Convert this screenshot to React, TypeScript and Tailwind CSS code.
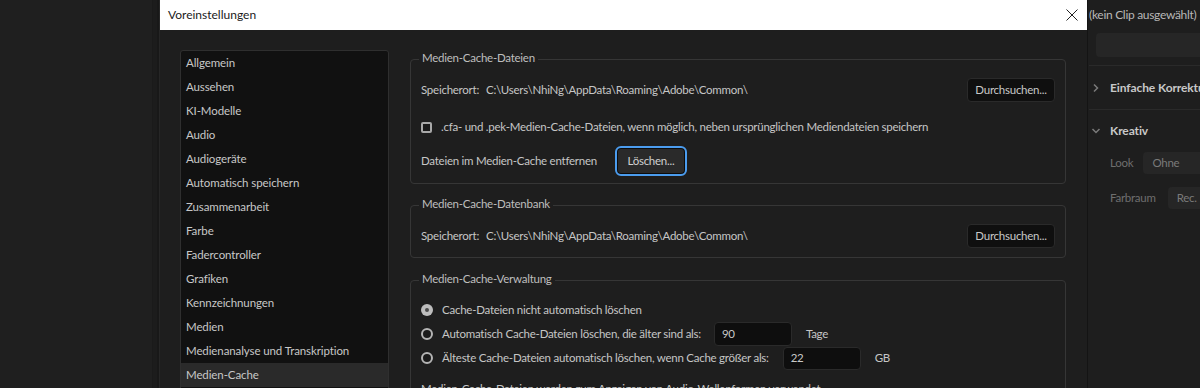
import React from "react";

const listItems = [
  "Allgemein",
  "Aussehen",
  "KI-Modelle",
  "Audio",
  "Audiogeräte",
  "Automatisch speichern",
  "Zusammenarbeit",
  "Farbe",
  "Fadercontroller",
  "Grafiken",
  "Kennzeichnungen",
  "Medien",
  "Medienanalyse und Transkription",
  "Medien-Cache",
];

function Legend({ children }: { children: React.ReactNode }) {
  return (
    <span className="absolute -top-[10px] left-[8px] bg-[#1e1e1e] px-[3px] leading-[16px] text-[#bebebe]">
      {children}
    </span>
  );
}

function BrowseButton() {
  return (
    <button className="flex h-[24px] w-[88px] items-center justify-center rounded-[4px] border border-[#2a2a2a] bg-[#0f0f0f] text-[#c8c8c8]">
      Durchsuchen...
    </button>
  );
}

function PathRow() {
  return (
    <div className="flex h-[24px] items-center justify-between">
      <div className="flex items-center">
        <span className="w-[65px]">Speicherort:</span>
        <span>C:\Users\NhiNg\AppData\Roaming\Adobe\Common\</span>
      </div>
      <BrowseButton />
    </div>
  );
}

function Radio({ checked }: { checked?: boolean }) {
  return checked ? (
    <span className="flex h-[12px] w-[12px] items-center justify-center rounded-full bg-[#bdbdbd]">
      <span className="h-[4px] w-[4px] rounded-full bg-[#4a4a4a]" />
    </span>
  ) : (
    <span className="h-[12px] w-[12px] rounded-full border-[2.5px] border-[#b4b4b4] bg-[#1a1a1a]" />
  );
}

function Chevron({ down }: { down?: boolean }) {
  return (
    <svg width="10" height="10" viewBox="0 0 10 10" className="shrink-0">
      {down ? (
        <path d="M1.5 3 L5 6.5 L8.5 3" fill="none" stroke="#7a7a7a" strokeWidth="1.5" />
      ) : (
        <path d="M3 1.5 L6.5 5 L3 8.5" fill="none" stroke="#7a7a7a" strokeWidth="1.5" />
      )}
    </svg>
  );
}

export default function App() {
  return (
    <div className="flex h-[388px] w-[1200px] overflow-hidden bg-[#1f1f1f] font-['Lato','Noto_Sans',sans-serif] text-[11.5px] tracking-[-0.25px] text-[#c6c6c6]">
      {/* left background strip */}
      <div className="flex w-[160px] shrink-0 justify-end">
        <div className="flex w-[8px]">
          <div className="w-[1px] bg-[#1a1a1a]" />
          <div className="w-[4px] bg-[#1c1c1c]" />
          <div className="w-[2px] bg-[#181818]" />
          <div className="w-[1px] bg-[#262626]" />
        </div>
      </div>

      {/* dialog */}
      <div className="flex w-[927px] shrink-0 flex-col">
        <div className="flex h-[30px] shrink-0 items-center justify-between bg-white pl-[8px] pr-[9px] text-[12px] tracking-normal text-[#1a1a1a]">
          <span>Voreinstellungen</span>
          <svg width="12" height="12" viewBox="0 0 12 12">
            <path d="M0.5 0.5 L11.5 11.5 M11.5 0.5 L0.5 11.5" stroke="#222" strokeWidth="1" />
          </svg>
        </div>
        <div className="flex min-h-0 flex-1 overflow-hidden bg-[#1e1e1e] pl-[20px] pr-[21px] pt-[20px]">
          {/* category list */}
          <div className="h-[360px] w-[209px] shrink-0 rounded-[3px] border border-[#2f2f2f] bg-[#111111] tracking-[-0.1px]">
            {listItems.map((item) => (
              <div
                key={item}
                className={
                  item === "Medien-Cache"
                    ? "flex h-[24px] items-center bg-[#2a2a2a] px-[5px] text-[#c8c8c8]"
                    : "flex h-[24px] items-center px-[5px] text-[#c8c8c8]"
                }
              >
                {item}
              </div>
            ))}
          </div>

          {/* settings */}
          <div className="ml-[21px] flex flex-1 flex-col">
            <div className="relative mt-[9px] rounded-[4px] border border-[#363636] px-[10px] pb-[7px] pt-[18px]">
              <Legend>Medien-Cache-Dateien</Legend>
              <PathRow />
              <div className="mt-[15px] flex h-[20px] items-center">
                <span className="h-[11px] w-[11px] rounded-[2px] border-2 border-[#a8a8a8] bg-[#1a1a1a]" />
                <span className="ml-[9px]">
                  .cfa- und .pek-Medien-Cache-Dateien, wenn möglich, neben ursprünglichen Mediendateien speichern
                </span>
              </div>
              <div className="mt-[9px] flex h-[30px] items-center">
                <span>Dateien im Medien-Cache entfernen</span>
                <button className="ml-[18px] flex h-[30px] w-[72px] items-center justify-center rounded-[6px] border-2 border-[#4b9cee] bg-[#2a2a2a] text-[#d0d0d0] shadow-[inset_0_0_0_1px_#0c0c0c]">
                  Löschen...
                </button>
              </div>
            </div>

            <div className="relative mt-[21px] rounded-[4px] border border-[#363636] px-[10px] pb-[9px] pt-[18px]">
              <Legend>Medien-Cache-Datenbank</Legend>
              <PathRow />
            </div>

            <div className="relative mt-[22px] rounded-[4px] border border-[#363636] px-[10px] pb-[9px] pt-[17px]">
              <Legend>Medien-Cache-Verwaltung</Legend>
              <div className="flex h-[24px] items-center">
                <Radio checked />
                <span className="ml-[9px]">Cache-Dateien nicht automatisch löschen</span>
              </div>
              <div className="flex h-[24px] items-center">
                <Radio />
                <span className="ml-[9px]">Automatisch Cache-Dateien löschen, die älter sind als:</span>
                <span className="ml-[13px] flex h-[24px] w-[78px] items-center rounded-[4px] border border-[#2a2a2a] bg-[#0e0e0e] pl-[7px] text-[#c8c8c8]">
                  90
                </span>
                <span className="ml-[14px]">Tage</span>
              </div>
              <div className="flex h-[24px] items-center">
                <Radio />
                <span className="ml-[9px]">Älteste Cache-Dateien automatisch löschen, wenn Cache größer als:</span>
                <span className="ml-[14px] flex h-[23px] w-[78px] items-center rounded-[4px] border border-[#2a2a2a] bg-[#0e0e0e] pl-[7px] text-[#c8c8c8]">
                  22
                </span>
                <span className="ml-[14px]">GB</span>
              </div>
              <div className="mt-[7px] flex h-[24px] items-center">
                Medien-Cache-Dateien werden zum Anzeigen von Audio-Wellenformen verwendet
              </div>
            </div>
          </div>
        </div>
      </div>

      {/* right panel */}
      <div className="flex min-w-0 flex-1 flex-col border-l border-[#141414] bg-[#1e1e1e] pl-[1px]">
        <div className="flex h-[30px] items-center whitespace-nowrap text-[12px] tracking-[-0.3px] text-[#b8b8b8]">
          (kein Clip ausgewählt)
        </div>
        <div className="ml-[7px] mt-[3px] h-[24px] rounded-l-[4px] bg-[#262626]" />
        <div className="mt-[8px] border-b border-[#2a2a2a]" />
        <div className="flex h-[44px] items-center gap-[9px] whitespace-nowrap border-b border-[#2a2a2a] pl-[2px] text-[12px] font-bold tracking-[-0.1px] text-[#c8c8c8]">
          <Chevron />
          <span>Einfache Korrektur</span>
        </div>
        <div className="flex h-[42px] items-center gap-[9px] whitespace-nowrap pl-[2px] text-[12px] font-bold tracking-[-0.1px] text-[#c8c8c8]">
          <Chevron down />
          <span>Kreativ</span>
        </div>
        <div className="flex h-[22px] items-center whitespace-nowrap pl-[21px] text-[#6e6e6e]">
          <span>Look</span>
          <span className="ml-[10px] flex h-[22px] flex-1 items-center rounded-l-[4px] bg-[#262626] pl-[9px] text-[#7a7a7a]">
            Ohne
          </span>
        </div>
        <div className="mt-[13px] flex h-[22px] items-center whitespace-nowrap pl-[21px] text-[#6e6e6e]">
          <span>Farbraum</span>
          <span className="ml-[12px] flex h-[22px] flex-1 items-center rounded-l-[4px] bg-[#262626] pl-[9px] text-[#7a7a7a]">
            Rec.
          </span>
        </div>
      </div>
    </div>
  );
}
